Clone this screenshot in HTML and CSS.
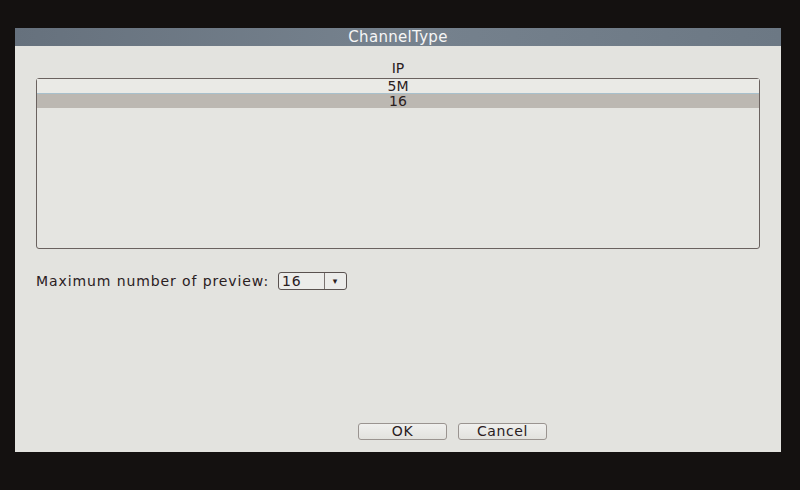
FILE: index.html
```html
<!DOCTYPE html>
<html lang="en">

<head>
    <meta charset="UTF-8">
    <meta name="viewport" content="width=device-width, initial-scale=1.0">
    <title>ChannelType</title>
    <link rel="stylesheet" href="styles.css">
</head>

<body>
    <div class="screen">
        <div class="title-bar">ChannelType</div>
        <div class="dialog-body">
            <div class="column-head">IP</div>
            <div class="list-box">
                <div class="list-row row-light">5M</div>
                <div class="list-row row-selected">16</div>
            </div>
            <div class="preview-row">
                <span class="preview-label">Maximum number of preview:</span>
                <div class="select-box">
                    <span class="select-value">16</span>
                    <span class="select-arrow">&#9662;</span>
                </div>
            </div>
            <div class="button-row">
                <button class="btn">OK</button>
                <button class="btn">Cancel</button>
            </div>
        </div>
    </div>
</body>

</html>
```

FILE: styles.css
```css
body {
    margin: 0;
    background: #141110;
    font-family: "DejaVu Sans", Verdana, sans-serif;
    font-size: 14px;
    color: #2a201e;
}

.screen {
    margin: 28px 0 0 15px;
    width: 766px;
    height: 424px;
    background: #e3e3df;
    display: flex;
    flex-direction: column;
}

.title-bar {
    height: 18px;
    line-height: 19px;
    text-align: center;
    color: #f6f6f6;
    font-size: 15px;
    letter-spacing: 0.3px;
    background: linear-gradient(to right, #66717d, #76828e 50%, #6c7884);
}

.dialog-body {
    flex: 1;
    display: flex;
    flex-direction: column;
    padding: 13px 21px 12px 21px;
}

.column-head {
    text-align: center;
    height: 19px;
    line-height: 19px;
}

.list-box {
    height: 169px;
    border: 1px solid #6a625f;
    border-radius: 3px;
    background: #e5e5e1;
}

.list-row {
    text-align: center;
    height: 14px;
    line-height: 14px;
}

.row-light {
    background: #eaeae6;
    border-bottom: 1px solid #a8c0cc;
}

.row-selected {
    background: #bcb8b2;
}

.preview-row {
    display: flex;
    align-items: center;
    margin-top: 23px;
    letter-spacing: 0.9px;
}

.preview-label {
    margin-right: 9px;
}

.select-box {
    display: flex;
    width: 67px;
    height: 16px;
    border: 1px solid #5a5250;
    border-radius: 3px;
    background: #ececea;
}

.select-value {
    flex: 1;
    padding-left: 3px;
    line-height: 16px;
    border-right: 1px solid #7a7270;
}

.select-arrow {
    width: 21px;
    text-align: center;
    font-size: 9px;
    line-height: 16px;
}

.button-row {
    margin-top: auto;
    display: flex;
    gap: 11px;
    padding-left: 322px;
}

.btn {
    width: 89px;
    height: 17px;
    padding: 0;
    font-family: inherit;
    font-size: 14px;
    line-height: 15px;
    letter-spacing: 0.6px;
    color: #2a201e;
    background: linear-gradient(#f0f0ee, #e2e2de);
    border: 1px solid #9a9490;
    border-radius: 3px;
}
```
